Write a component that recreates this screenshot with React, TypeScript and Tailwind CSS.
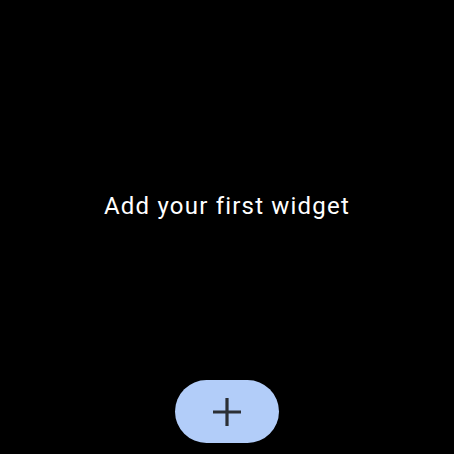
export default function App() {
  return (
    <div className="flex h-[454px] w-[454px] flex-col items-center bg-black font-['Roboto',sans-serif]">
      <div className="flex w-full flex-1 items-center justify-center pt-[32px]">
        <p className="text-[24px] font-normal leading-none tracking-[1.2px] text-white">Add your first widget</p>
      </div>
      <button
        type="button"
        className="mb-[11px] flex h-[63px] w-[104px] items-center justify-center rounded-full bg-[#b2cdf9]"
        aria-label="Add widget"
      >
        <svg width="30" height="30" viewBox="0 0 30 30" fill="none">
          <path d="M15 1v28M1 15h28" stroke="#2b2f35" strokeWidth="3.2" />
        </svg>
      </button>
    </div>
  );
}
